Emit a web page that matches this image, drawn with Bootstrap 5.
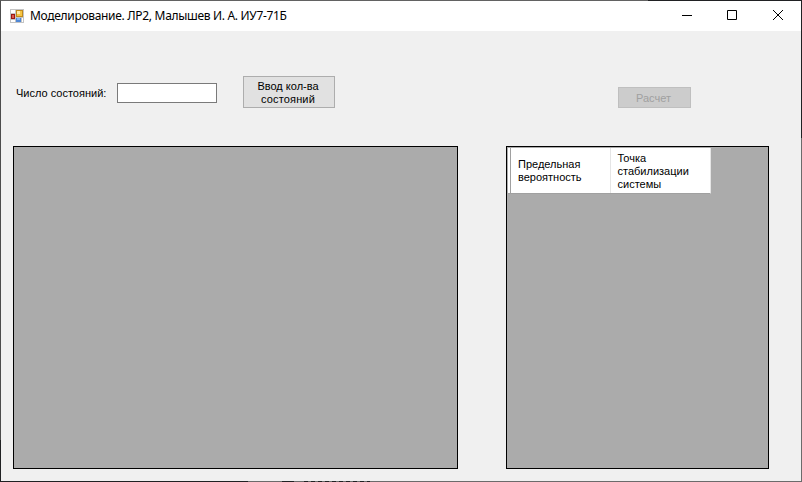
<!DOCTYPE html>
<html lang="ru">
<head>
<meta charset="utf-8">
<meta name="viewport" content="width=device-width, initial-scale=1">
<title>Моделирование. ЛР2</title>
<link href="https://cdn.jsdelivr.net/npm/bootstrap@5.3.0/dist/css/bootstrap.min.css" rel="stylesheet">
<style>
body{font:11px/13px "Liberation Sans",Arial,sans-serif;color:#000}
.app-window{width:802px;height:482px;border:1px solid;border-color:#626262 #6b6b6b #6b6b6b #4c4c4c;background:#f0f0f0;position:relative}
/* darker stretches of the window outline */
.edge{position:absolute;background:#202123}
.edge-top{top:-1px;left:647px;right:-1px;height:1px}
.edge-right{top:-1px;right:-1px;width:1px;height:138px}
.edge-bottom{bottom:-1px;left:-1px;width:248px;height:1px}
.edge-notch{bottom:-1px;left:281px;width:12px;height:1px}
.edge-dots{bottom:-1px;left:303px;width:66px;height:1px;background:repeating-linear-gradient(90deg,#202123 0 4px,#6b6b6b 4px 7px)}
.edge-left{left:-1px;bottom:-1px;width:1px;height:42px}
.title-bar{height:30px;padding-left:9px}
.title-text{font:12px/16px "Noto Sans","Open Sans",sans-serif;margin-left:6px;letter-spacing:-.31px}
.caption-btn{width:46px;height:30px;border:0;background:none;padding:0}
.caption-btn.narrow{width:45px}
.controls{height:115px;padding:45px 0 0 15px}
.state-label{width:101px;margin-top:11px;white-space:nowrap}
.state-input{width:100px;height:20px;margin-top:7px;border:1px solid #7a7a7a;border-radius:0;padding:2px}
.flat-btn{border:1px solid #adadad;border-radius:0;background:#e1e1e1;color:#000;font-size:11px;line-height:13px;white-space:nowrap}
.btn-enter{width:92px;height:32px;margin-left:26px;padding:2px 2px 0 0}
.wide-line{letter-spacing:.15px}
.btn-calc,.btn-calc:disabled{width:73px;height:21px;margin:11px 0 0 283px;padding:1px 2px 0 0;background:#ccc;border-color:#bfbfbf;color:#a0a0a0;opacity:1}
.grids{padding-left:12px;gap:48px}
.data-grid{height:323px;background:#ababab;border:1px solid #000}
.grid-main{width:445px}
.grid-result{width:263px;padding:1px}
.head-row{width:203px;height:46px;background:#fff;border-bottom:1px solid #a0a0a0;border-right:1px solid #e5e5e5}
.head-corner{width:3px;border-right:1px solid #a0a0a0}
.head-cell{width:100px;padding-left:7px}
.head-cell.tall{padding-top:1px}
.head-cell.first{border-right:1px solid #e5e5e5}
</style>
<script src="https://cdn.jsdelivr.net/npm/bootstrap@5.3.0/dist/js/bootstrap.bundle.min.js"></script>
</head>
<body class="overflow-hidden">
<div class="app-window">
 <span class="edge edge-top"></span><span class="edge edge-right"></span><span class="edge edge-bottom"></span><span class="edge edge-notch"></span><span class="edge edge-dots"></span><span class="edge edge-left"></span>
 <header class="title-bar d-flex align-items-center bg-white">
  <svg width="14" height="14" viewBox="0 0 14 14" shape-rendering="crispEdges">
   <path d="M0 0h14v14H0z" fill="#c4c4c4"/><path d="M1 1h4v3H1zM1 11h4v2H1zM12 9h1v4h-1z" fill="#fff"/>
   <path d="M6 1h7v7H6z" fill="#c08a1c"/><path d="M7 2h5v5H7z" fill="#f6c544"/><path d="M7 2h3v3H7z" fill="#ffe9a4"/>
   <path d="M1 5h4v5H1z" fill="#9b1712"/><path d="M2 6h2v3H2z" fill="#dc5a4d"/>
   <path d="M6 9h5v4H6z" fill="#4f87d6"/><path d="M7 9h3v2H7z" fill="#86b6f2"/>
  </svg>
  <span class="title-text">Моделирование. ЛР2, Малышев И. А. ИУ7-71Б</span>
  <div class="d-flex ms-auto">
   <button class="caption-btn narrow" aria-label="Свернуть"><svg class="d-block" width="45" height="30"><path d="M18 14.5h10" stroke="#000"/></svg></button>
   <button class="caption-btn" aria-label="Развернуть"><svg class="d-block" width="46" height="30"><path d="M18.5 9.5h9v9h-9z" fill="none" stroke="#000"/></svg></button>
   <button class="caption-btn" aria-label="Закрыть"><svg class="d-block" width="46" height="30"><path d="M18 9l10 10M28 9L18 19" stroke="#000"/></svg></button>
  </div>
 </header>
 <main>
  <div class="controls d-flex align-items-start">
   <label class="state-label" for="states">Число состояний:</label>
   <input id="states" type="text" class="form-control state-input">
   <button class="btn flat-btn btn-enter">Ввод кол-ва<br><span class="wide-line">состояний</span></button>
   <button class="btn flat-btn btn-calc" disabled>Расчет</button>
  </div>
  <div class="grids d-flex">
   <section class="data-grid grid-main"></section>
   <section class="data-grid grid-result">
    <div class="head-row d-flex">
     <div class="head-corner"></div>
     <div class="head-cell first d-flex align-items-center">Предельная<br>вероятность</div>
     <div class="head-cell tall d-flex align-items-center">Точка<br>стабилизации<br>системы</div>
    </div>
   </section>
  </div>
 </main>
</div>
</body>
</html>
